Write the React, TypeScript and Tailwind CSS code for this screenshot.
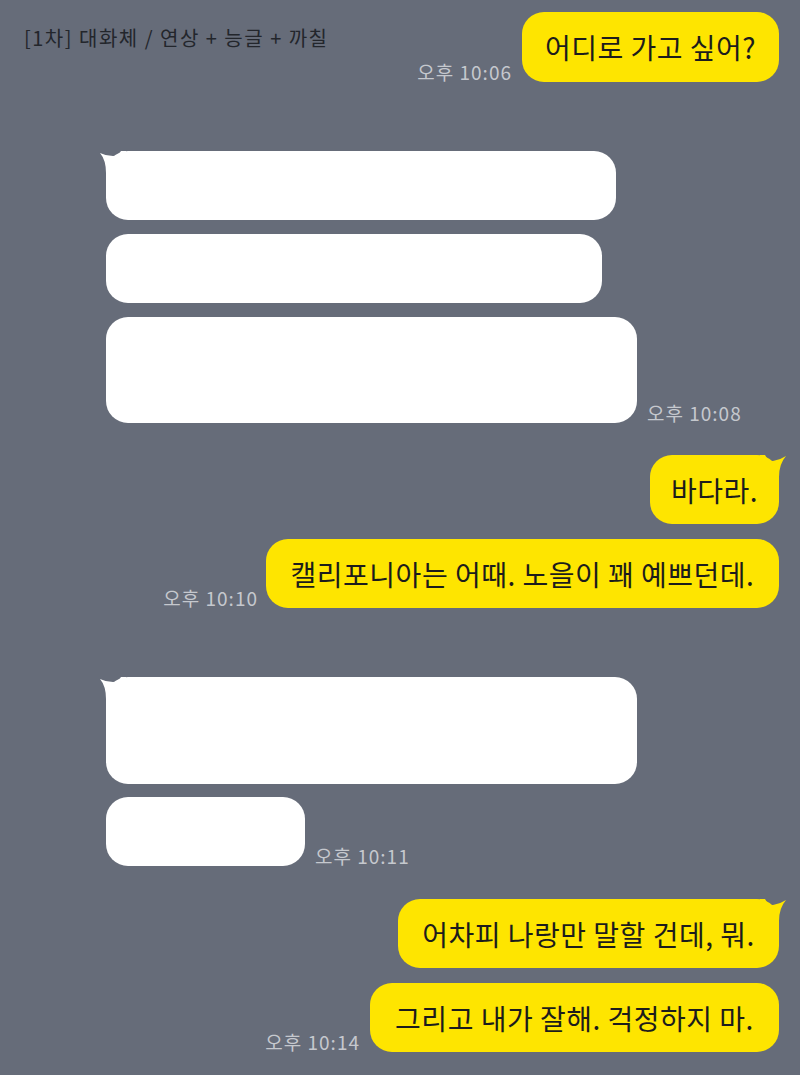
import React from "react";

function YellowTail() {
  return (
    <svg className="absolute right-[-7px] top-0" width="26" height="26" viewBox="0 0 26 26">
      <path d="M0,0 H5 Q8,6 13,6 Q20,5 26,1 Q19,9 19,22 V26 H0 Z" fill="#fee500" />
    </svg>
  );
}

function WhiteTail() {
  return (
    <svg className="absolute left-[-6px] top-0" width="26" height="26" viewBox="0 0 26 26">
      <path d="M26,0 H21 Q18,5 13,5 Q6,5 0,2 Q6,9 6,22 V26 H26 Z" fill="#ffffff" />
    </svg>
  );
}

function Yellow({ className, text, tail }: { className: string; text: string; tail?: boolean }) {
  return (
    <div
      className={
        "relative flex items-center justify-center rounded-[22px] bg-[#fee500] text-[28px] leading-none tracking-[0.5px] text-[#1c1c1c] whitespace-nowrap " +
        className
      }
    >
      {tail && <YellowTail />}
      <span className="relative">{text}</span>
    </div>
  );
}

function White({ className, tail }: { className: string; tail?: boolean }) {
  return (
    <div className={"relative rounded-[22px] bg-white " + className}>
      {tail && <WhiteTail />}
    </div>
  );
}

function Time({ t }: { t: string }) {
  return (
    <div className="mb-[1px] text-[19px] leading-none tracking-[1px] text-[#c5c8ce] whitespace-nowrap">{t}</div>
  );
}

export default function App() {
  return (
    <div className="h-[1075px] w-[800px] overflow-hidden bg-[#666c79] font-['Noto_Sans_CJK_KR',sans-serif]">
      <div className="flex justify-between pr-[21px] pt-[12px]">
        <div className="pl-[24px] pt-[16px] text-[20px] leading-none tracking-[1.5px] text-[#23262c] whitespace-nowrap">
          [1차] 대화체 / 연상 + 능글 + 까칠
        </div>
        <div className="flex items-end gap-[10px]">
          <Time t="오후 10:06" />
          <Yellow className="h-[70px] w-[257px]" text="어디로 가고 싶어?" />
        </div>
      </div>

      <div className="mt-[69px] flex flex-col gap-[14px] pl-[106px]">
        <White className="h-[69px] w-[510px]" tail />
        <White className="h-[69px] w-[496px]" />
        <div className="flex items-end gap-[10px]">
          <White className="h-[106px] w-[531px]" />
          <Time t="오후 10:08" />
        </div>
      </div>

      <div className="mt-[32px] flex flex-col items-end gap-[15px] pr-[21px]">
        <Yellow className="h-[69px] w-[129px]" text="바다라." tail />
        <div className="flex items-end gap-[8px]">
          <Time t="오후 10:10" />
          <Yellow className="h-[69px] w-[513px]" text="캘리포니아는 어때. 노을이 꽤 예쁘던데." />
        </div>
      </div>

      <div className="mt-[69px] flex flex-col gap-[13px] pl-[106px]">
        <White className="h-[107px] w-[531px]" tail />
        <div className="flex items-end gap-[10px]">
          <White className="h-[69px] w-[199px]" />
          <Time t="오후 10:11" />
        </div>
      </div>

      <div className="mt-[33px] flex flex-col items-end gap-[15px] pr-[21px]">
        <Yellow className="h-[69px] w-[381px]" text="어차피 나랑만 말할 건데, 뭐." tail />
        <div className="flex items-end gap-[10px]">
          <Time t="오후 10:14" />
          <Yellow className="h-[69px] w-[409px]" text="그리고 내가 잘해. 걱정하지 마." />
        </div>
      </div>
    </div>
  );
}
